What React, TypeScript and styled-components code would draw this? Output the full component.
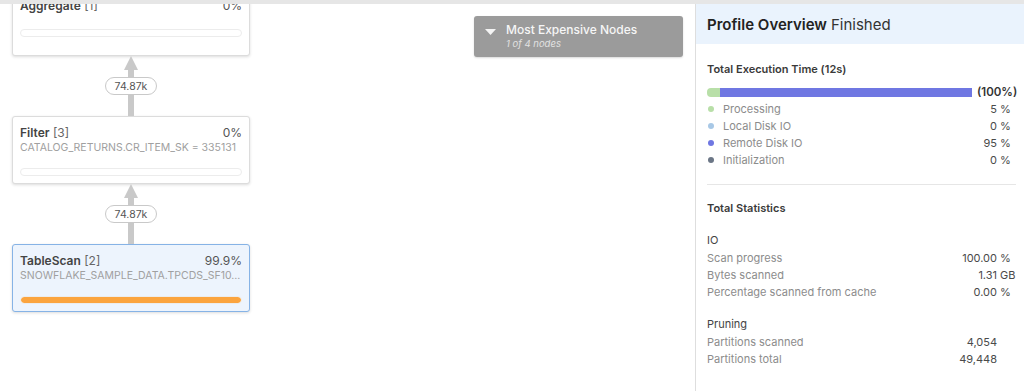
import React from "react";
import styled, { createGlobalStyle } from "styled-components";

const GlobalStyle = createGlobalStyle`
  html, body { margin: 0; padding: 0; background: #fff; }
  body { font-family: Inter, "Noto Sans", sans-serif; -webkit-font-smoothing: antialiased; }
  * { box-sizing: border-box; }
`;

const Page = styled.div`
  width: 1024px;
  height: 391px;
  display: flex;
  flex-direction: column;
  overflow: hidden;
  background: #fff;
`;

const TopBand = styled.div`
  height: 4px;
  flex: none;
  background: #e6e6e6;
`;

const Main = styled.div`
  flex: 1;
  display: flex;
  min-height: 0;
`;

const Canvas = styled.div`
  flex: 1;
  display: flex;
  align-items: flex-start;
  overflow: hidden;
  padding: 0 12px;
`;

const NodeColumn = styled.div`
  width: 238px;
  margin-top: -16px;
  display: flex;
  flex-direction: column;
`;

const Card = styled.div<{ $active?: boolean }>`
  height: 68px;
  display: flex;
  flex-direction: column;
  padding: 8px 7px 7px 7px;
  border-radius: 3px;
  border: 1px solid ${(p) => (p.$active ? "#86b3e6" : "#dcdcdc")};
  background: ${(p) => (p.$active ? "#edf4fd" : "#fff")};
  box-shadow: 0 1px 3px rgba(0, 0, 0, 0.14);
`;

const TitleRow = styled.div`
  display: flex;
  justify-content: space-between;
  align-items: center;
  height: 16px;
  font-size: 12px;
  color: #555;
`;

const Name = styled.span`
  font-weight: 600;
  color: #444;
`;

const Idx = styled.span`
  font-weight: 400;
  color: #666;
`;

const Sub = styled.div`
  height: 16px;
  line-height: 16px;
  font-size: 10.5px;
  color: #a0a0a0;
  white-space: nowrap;
  overflow: hidden;
`;

const Bar = styled.div<{ $gap: number }>`
  margin-top: ${(p) => p.$gap}px;
  height: 8px;
  border-radius: 4px;
  border: 1px solid #ececec;
  background: #fff;
  overflow: hidden;
`;

const BarFill = styled.div`
  height: 100%;
  background: #fba43e;
  border-radius: 3px;
`;

const Edge = styled.div`
  position: relative;
  height: 60px;
  display: flex;
  justify-content: center;
`;

const Pill = styled.div`
  position: absolute;
  left: 50%;
  top: 30px;
  transform: translate(-50%, -50%);
  width: 52px;
  height: 18px;
  border: 1px solid #c9c9c9;
  border-radius: 9px;
  background: #fff;
  font-size: 10.5px;
  color: #555;
  display: flex;
  align-items: center;
  justify-content: center;
`;

const Expensive = styled.div`
  margin-left: auto;
  margin-top: 12px;
  width: 209px;
  height: 41px;
  background: #9b9b9b;
  border-radius: 3px;
  box-shadow: 0 1px 2px rgba(0, 0, 0, 0.15);
  display: flex;
  align-items: flex-start;
  padding: 6px 11px;
  gap: 10px;
`;

const Caret = styled.svg`
  margin-top: 7px;
  flex: none;
`;

const ExpText = styled.div`
  display: flex;
  flex-direction: column;
`;

const ExpTitle = styled.div`
  font-size: 12px;
  line-height: 15px;
  font-weight: 500;
  color: #f6f6f6;
`;

const ExpSub = styled.div`
  font-size: 9.5px;
  line-height: 14px;
  font-style: italic;
  color: #e2e2e2;
`;

const Panel = styled.div`
  width: 329px;
  flex: none;
  border-left: 1px solid #dedede;
  display: flex;
  flex-direction: column;
`;

const Header = styled.div`
  height: 40px;
  background: #eaf3fd;
  display: flex;
  align-items: center;
  padding: 0 11px;
  font-size: 15px;
  color: #333;
`;

const HeaderStrong = styled.span`
  font-weight: 600;
  color: #222;
  margin-right: 4px;
`;

const Body = styled.div`
  padding: 0 8px 0 11px;
  display: flex;
  flex-direction: column;
`;

const SectionTitle = styled.div<{ $top: number }>`
  margin-top: ${(p) => p.$top}px;
  height: 16px;
  line-height: 16px;
  font-size: 11px;
  font-weight: 600;
  color: #3a3a3a;
`;

const TimeBarRow = styled.div`
  margin-top: 7px;
  height: 16px;
  display: flex;
  align-items: center;
  gap: 5px;
`;

const TimeBar = styled.div`
  width: 265px;
  height: 9px;
  display: flex;
`;

const Seg = styled.div<{ $color: string; $first?: boolean }>`
  background: ${(p) => p.$color};
  border-radius: ${(p) => (p.$first ? "4px 0 0 4px" : "0")};
`;

const Total = styled.span`
  font-size: 11.5px;
  font-weight: 600;
  color: #333;
`;

const Group = styled.div<{ $top?: number }>`
  margin-top: ${(p) => p.$top ?? 0}px;
  display: flex;
  flex-direction: column;
`;

const Row = styled.div`
  height: 17px;
  display: grid;
  grid-template-columns: 1fr auto 19px;
  align-items: center;
  font-size: 11px;
`;

const Label = styled.span`
  display: flex;
  align-items: center;
  gap: 9px;
  color: #8c8c8c;
`;

const Dot = styled.span<{ $color: string }>`
  width: 6px;
  height: 6px;
  border-radius: 50%;
  margin-left: 1px;
  background: ${(p) => p.$color};
`;

const Num = styled.span`
  text-align: right;
  color: #4a4a4a;
`;

const Unit = styled.span`
  padding-left: 3px;
  color: #4a4a4a;
`;

const GroupHead = styled.div`
  height: 17px;
  line-height: 17px;
  font-size: 11px;
  color: #444;
`;

const Divider = styled.div`
  margin-top: 16px;
  height: 1px;
  background: #e6e6e6;
`;

const Arrow = () => (
  <svg width="14" height="60" viewBox="0 0 14 60">
    <rect x="4" y="12" width="6" height="48" fill="#c9c9c9" />
    <polygon points="7,0 14,14 0,14" fill="#c9c9c9" />
  </svg>
);

const nodes = [
  { name: "Aggregate", idx: 1, pct: "0%", sub: "", fill: 0 },
  { name: "Filter", idx: 3, pct: "0%", sub: "CATALOG_RETURNS.CR_ITEM_SK = 335131", fill: 0 },
  { name: "TableScan", idx: 2, pct: "99.9%", sub: "SNOWFLAKE_SAMPLE_DATA.TPCDS_SF10...", fill: 100, active: true },
];

const legend = [
  { label: "Processing", color: "#b8dfa8", v: "5" },
  { label: "Local Disk IO", color: "#a8c8e6", v: "0" },
  { label: "Remote Disk IO", color: "#6f77e2", v: "95" },
  { label: "Initialization", color: "#6b7686", v: "0" },
];

const io = [
  { label: "Scan progress", v: "100.00", u: "%" },
  { label: "Bytes scanned", v: "1.31", u: "GB" },
  { label: "Percentage scanned from cache", v: "0.00", u: "%" },
];

const pruning = [
  { label: "Partitions scanned", v: "4,054", u: "" },
  { label: "Partitions total", v: "49,448", u: "" },
];

export default function App() {
  return (
    <Page>
      <GlobalStyle />
      <TopBand />
      <Main>
        <Canvas>
          <NodeColumn>
            {nodes.map((n, i) => (
              <React.Fragment key={n.name}>
                {i > 0 && (
                  <Edge>
                    <Arrow />
                    <Pill>74.87k</Pill>
                  </Edge>
                )}
                <Card $active={n.active}>
                  <TitleRow>
                    <span>
                      <Name>{n.name}</Name> <Idx>[{n.idx}]</Idx>
                    </span>
                    <span>{n.pct}</span>
                  </TitleRow>
                  {n.sub && <Sub>{n.sub}</Sub>}
                  <Bar $gap={n.sub ? 13 : 16}>
                    {n.fill > 0 && <BarFill style={{ width: `${n.fill}%` }} />}
                  </Bar>
                </Card>
              </React.Fragment>
            ))}
          </NodeColumn>
          <Expensive>
            <Caret width="11" height="6" viewBox="0 0 11 6">
              <polygon points="0,0 11,0 5.5,6" fill="#f4f4f4" />
            </Caret>
            <ExpText>
              <ExpTitle>Most Expensive Nodes</ExpTitle>
              <ExpSub>1 of 4 nodes</ExpSub>
            </ExpText>
          </Expensive>
        </Canvas>
        <Panel>
          <Header>
            <HeaderStrong>Profile Overview</HeaderStrong> Finished
          </Header>
          <Body>
            <SectionTitle $top={17}>Total Execution Time (12s)</SectionTitle>
            <TimeBarRow>
              <TimeBar>
                <Seg $color="#b8dfa8" $first style={{ width: "13px" }} />
                <Seg $color="#6f77e2" style={{ width: "252px" }} />
              </TimeBar>
              <Total>(100%)</Total>
            </TimeBarRow>
            <Group>
              {legend.map((l) => (
                <Row key={l.label}>
                  <Label>
                    <Dot $color={l.color} />
                    {l.label}
                  </Label>
                  <Num>{l.v}</Num>
                  <Unit>%</Unit>
                </Row>
              ))}
            </Group>
            <Divider />
            <SectionTitle $top={15}>Total Statistics</SectionTitle>
            <Group $top={16}>
              <GroupHead>IO</GroupHead>
              {io.map((r) => (
                <Row key={r.label}>
                  <Label>{r.label}</Label>
                  <Num>{r.v}</Num>
                  <Unit>{r.u}</Unit>
                </Row>
              ))}
            </Group>
            <Group $top={16}>
              <GroupHead>Pruning</GroupHead>
              {pruning.map((r) => (
                <Row key={r.label}>
                  <Label>{r.label}</Label>
                  <Num>{r.v}</Num>
                  <Unit>{r.u}</Unit>
                </Row>
              ))}
            </Group>
          </Body>
        </Panel>
      </Main>
    </Page>
  );
}
